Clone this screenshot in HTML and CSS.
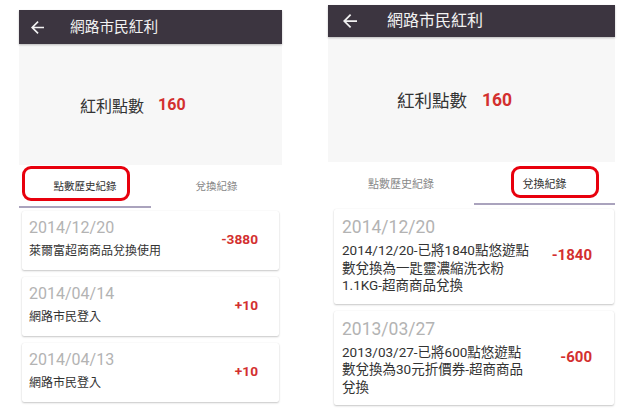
FILE: index.html
```html
<!DOCTYPE html>
<html lang="zh-Hant">
<head>
<meta charset="utf-8">
<title>網路市民紅利</title>
<link rel="stylesheet" href="styles.css">
</head>
<body>
<div class="screens">
  <section class="phone phone--a">
    <header class="appbar">
      <svg class="back" viewBox="4 4 16 16" aria-hidden="true"><path d="M20 11H7.83l5.59-5.59L12 4l-8 8 8 8 1.41-1.41L7.83 13H20v-2z"/></svg>
      <h1 class="title">網路市民紅利</h1>
    </header>
    <div class="summary">
      <span class="label">紅利點數</span>
      <span class="points">160</span>
    </div>
    <nav class="tabs">
      <div class="tab tab--active">點數歷史紀錄<span class="mark"></span></div>
      <div class="tab">兌換紀錄</div>
    </nav>
    <ul class="records">
      <li class="card">
        <div class="info">
          <div class="date">2014/12/20</div>
          <div class="desc">萊爾富超商商品兌換使用</div>
        </div>
        <div class="amount">-3880</div>
      </li>
      <li class="card">
        <div class="info">
          <div class="date">2014/04/14</div>
          <div class="desc">網路市民登入</div>
        </div>
        <div class="amount">+10</div>
      </li>
      <li class="card">
        <div class="info">
          <div class="date">2014/04/13</div>
          <div class="desc">網路市民登入</div>
        </div>
        <div class="amount">+10</div>
      </li>
    </ul>
  </section>

  <section class="phone phone--b">
    <header class="appbar">
      <svg class="back" viewBox="4 4 16 16" aria-hidden="true"><path d="M20 11H7.83l5.59-5.59L12 4l-8 8 8 8 1.41-1.41L7.83 13H20v-2z"/></svg>
      <h1 class="title">網路市民紅利</h1>
    </header>
    <div class="summary">
      <span class="label">紅利點數</span>
      <span class="points">160</span>
    </div>
    <nav class="tabs">
      <div class="tab">點數歷史紀錄</div>
      <div class="tab tab--active">兌換紀錄<span class="mark"></span></div>
    </nav>
    <ul class="records">
      <li class="card">
        <div class="info">
          <div class="date">2014/12/20</div>
          <div class="desc">2014/12/20-已將1840點悠遊點數兌換為一匙靈濃縮洗衣粉1.1KG-超商商品兌換</div>
        </div>
        <div class="amount">-1840</div>
      </li>
      <li class="card">
        <div class="info">
          <div class="date">2013/03/27</div>
          <div class="desc">2013/03/27-已將600點悠遊點數兌換為30元折價券-超商商品兌換</div>
        </div>
        <div class="amount">-600</div>
      </li>
    </ul>
  </section>
</div>
</body>
</html>
```
FILE: styles.css
```css
* { box-sizing: border-box; }

html, body {
  margin: 0;
  padding: 0;
  background: #ffffff;
}

body {
  font-family: Roboto, "Noto Sans CJK TC", "Noto Sans", sans-serif;
  color: #333333;
  width: 633px;
  height: 414px;
  overflow: hidden;
}

.screens {
  display: flex;
  align-items: flex-start;
}

.phone {
  display: flex;
  flex-direction: column;
  background: #ffffff;
}

.phone--a {
  width: 263px;
  margin-left: 19px;
  margin-top: 10px;
}

.phone--b {
  width: 287px;
  margin-left: 46px;
  margin-top: 5px;
}

/* App bar */
.appbar {
  display: flex;
  align-items: center;
  background: #3c3540;
  color: #f2f2f2;
  box-shadow: 0 1px 2px rgba(0, 0, 0, 0.25);
  position: relative;
  z-index: 1;
}

.phone--a .appbar { height: 34px; padding-left: 12px; }
.phone--b .appbar { height: 32px; padding-left: 15px; }

.back {
  fill: #f2f2f2;
  flex: none;
}

.phone--a .back { width: 13px; height: 13px; margin-right: 26px; }
.phone--b .back { width: 14px; height: 14px; margin-right: 30px; }

.title {
  margin: 0;
  font-weight: 400;
  line-height: 1;
  white-space: nowrap;
}

.phone--a .title { font-size: 14.7px; }
.phone--b .title { font-size: 16px; }

/* Points summary */
.summary {
  display: flex;
  align-items: center;
  background: #f7f7f7;
}

.phone--a .summary { height: 121px; padding-left: 61px; gap: 14px; font-size: 16px; }
.phone--b .summary { height: 125px; padding-left: 69px; gap: 15px; font-size: 17.5px; }

.label { color: #333333; }

.points {
  color: #d32f2f;
  font-weight: 700;
}

/* Tabs */
.tabs {
  display: grid;
}

.phone--a .tabs { grid-template-columns: 132px 1fr; }
.phone--b .tabs { grid-template-columns: 146px 1fr; }

.tab {
  position: relative;
  display: flex;
  align-items: center;
  justify-content: center;
  color: #888888;
  border-bottom: 2px solid transparent;
  white-space: nowrap;
}

.phone--a .tab { height: 43px; font-size: 10.5px; }
.phone--b .tab { height: 43px; font-size: 11px; }

.tab--active {
  color: #333333;
  border-bottom-color: #aaa3bd;
}

.mark {
  position: absolute;
  border: 3px solid #e8000d;
  border-radius: 9px;
}

.phone--a .mark { left: 3px; top: 1px; width: 108px; height: 35px; }
.phone--b .mark { left: 37px; top: 4px; width: 88px; height: 32px; }

/* Records */
.records {
  list-style: none;
  margin: 0;
  display: flex;
  flex-direction: column;
  gap: 7px;
}

.phone--a .records { padding: 3px 3px 0 3px; }
.phone--b .records { padding: 4px 1px 0 6px; }

.card {
  display: flex;
  align-items: center;
  justify-content: space-between;
  background: #ffffff;
  border-radius: 2px;
  box-shadow: 0 1px 2px rgba(0, 0, 0, 0.22), 0 0 1px rgba(0, 0, 0, 0.08);
}

.phone--a .card { padding: 7px 21px 10px 7px; }
.phone--b .card { padding: 7px 22px 9px 8px; }

.date {
  color: #b3b3b3;
  font-weight: 400;
}

.phone--a .date { font-size: 16px; line-height: 20px; }
.phone--b .date { font-size: 17.5px; line-height: 22px; }

.desc {
  color: #333333;
  margin-top: 4px;
}

.phone--a .desc { font-size: 12px; line-height: 18px; }
.phone--b .desc { font-size: 13.5px; line-height: 17.5px; width: 190px; }

.amount {
  color: #d32f2f;
  font-weight: 700;
  white-space: nowrap;
}

.phone--a .amount { font-size: 13.7px; }
.phone--b .amount { font-size: 15px; }
```
